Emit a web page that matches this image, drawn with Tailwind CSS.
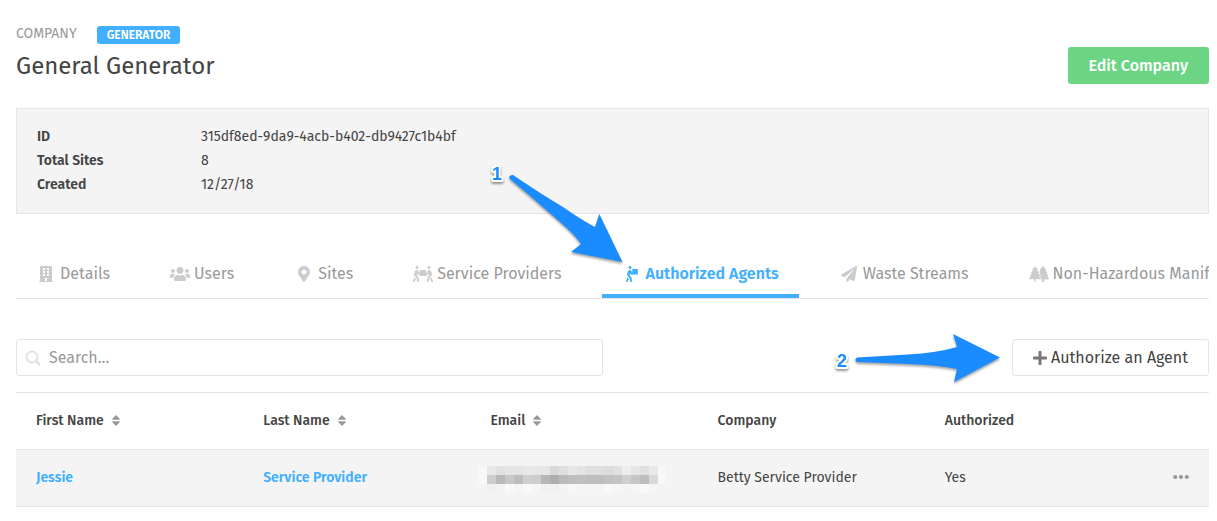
<!DOCTYPE html>
<html lang="en">
<head>
    <meta charset="UTF-8">
    <meta name="viewport" content="width=device-width, initial-scale=1.0">
    <title>General Generator</title>

    <script src="https://cdn.jsdelivr.net/npm/@tailwindcss/browser@4"></script>
</head>

<body class="relative bg-white text-[#444] text-sm leading-6 overflow-x-hidden font-['Fira_Sans','Noto_Sans',sans-serif]">
    <!-- shared icons -->
    <svg class="hidden">
        <symbol id="sort" viewBox="0 0 8 11">
            <path d="M4 0 7.7 3.8Q8.2 4.8 7.2 4.8H.8Q-.2 4.8 .3 3.8ZM4 11 7.7 7.2Q8.2 6.2 7.2 6.2H.8Q-.2 6.2 .3 7.2Z"></path>
        </symbol>
    </svg>

    <div class="pl-4 pr-2 pt-[22px]">
        <header class="flex justify-between items-end">
            <div>
                <div class="flex items-end gap-5">
                    <span class="text-[#999]">COMPANY</span>
                    <span class="bg-[#42afff] text-white text-xs font-semibold leading-[18px] mb-[2px] px-[10px] rounded-[3px]">GENERATOR</span>
                </div>
                <h1 class="text-2xl leading-10">General Generator</h1>
            </div>

            <button class="bg-[#6cd584] text-white text-base font-medium h-[37px] px-[21px] mb-[2px] rounded-[3px]">Edit Company</button>
        </header>

        <dl class="grid grid-cols-[164px_1fr] mt-[22px] px-5 py-4 bg-[#f4f4f4] border border-[#e5e5e5]">
            <dt class="font-semibold">ID</dt>
            <dd>315df8ed-9da9-4acb-b402-db9427c1b4bf</dd>
            <dt class="font-semibold">Total Sites</dt>
            <dd>8</dd>
            <dt class="font-semibold">Created</dt>
            <dd>12/27/18</dd>
        </dl>

        <nav class="flex gap-5 mt-9 border-b border-[#e5e5e5] overflow-hidden whitespace-nowrap text-base text-[#999]">
            <a href="#" class="flex shrink-0 items-center gap-1 px-5 pt-3 pb-2 border-b-4 border-transparent">
                <svg class="w-5 h-4 text-[#ccc]" viewBox="0 0 448 512" fill="currentColor">
                    <path fill-rule="evenodd" d="M436 480h-20V24c0-13-11-24-24-24H56C43 0 32 11 32 24v456H12c-7 0-12 5-12 12v20h448v-20c0-7-5-12-12-12zM128 64h64v64h-64zM256 64h64v64h-64zM128 160h64v64h-64zM256 160h64v64h-64zM128 256h64v64h-64zM256 256h64v64h-64zM192 384h64v96h-64z"></path>
                </svg>
                Details
            </a>
            <a href="#" class="flex shrink-0 items-center gap-1 px-5 pt-3 pb-2 border-b-4 border-transparent">
                <svg class="w-5 h-4 text-[#ccc]" viewBox="0 0 640 512" fill="currentColor">
                    <path d="M96 224c35.300 0 64-28.700 64-64s-28.700-64-64-64-64 28.700-64 64 28.700 64 64 64zm448 0c35.300 0 64-28.700 64-64s-28.700-64-64-64-64 28.700-64 64 28.700 64 64 64zm32 32h-64c-17.600 0-33.500 7.100-45.100 18.600 40.300 22.100 68.900 62 75.100 109.400h66c17.700 0 32-14.300 32-32v-32c0-35.300-28.700-64-64-64zm-256 0c61.900 0 112-50.100 112-112S381.900 32 320 32 208 82.100 208 144s50.100 112 112 112zm76.800 32h-8.300c-20.800 10-43.900 16-68.500 16s-47.600-6-68.500-16h-8.300C179.600 288 128 339.600 128 403.200V432c0 26.500 21.500 48 48 48h288c26.500 0 48-21.500 48-48v-28.800c0-63.600-51.600-115.200-115.200-115.200zm-223.700-13.400C161.500 263.100 145.600 256 128 256H64c-35.300 0-64 28.700-64 64v32c0 17.700 14.300 32 32 32h65.900c6.300-47.400 34.900-87.300 75.200-109.400z"></path>
                </svg>
                Users
            </a>
            <a href="#" class="flex shrink-0 items-center gap-1 px-5 pt-3 pb-2 border-b-4 border-transparent">
                <svg class="w-5 h-4 text-[#ccc]" viewBox="0 0 384 512" fill="currentColor">
                    <path d="M172.300 501.700C27 291 0 269.400 0 192 0 86 86 0 192 0s192 86 192 192c0 77.400-27 99-172.300 309.700-9.500 13.800-29.900 13.800-39.400 0zM192 272c44.200 0 80-35.800 80-80s-35.800-80-80-80-80 35.800-80 80 35.800 80 80 80z"></path>
                </svg>
                Sites
            </a>
            <a href="#" class="flex shrink-0 items-center gap-1 px-5 pt-3 pb-2 border-b-4 border-transparent">
                <svg class="w-5 h-4 text-[#ccc]" viewBox="0 0 640 512" fill="currentColor">
                    <path d="M128 96c26.500 0 48-21.500 48-48S154.500 0 128 0 80 21.500 80 48s21.500 48 48 48zm384 0c26.500 0 48-21.500 48-48S538.500 0 512 0s-48 21.500-48 48 21.500 48 48 48zm125.700 372.100l-44-110-41.100 46.400-2 18.200 27.700 69.200c5 12.500 17 20.100 29.700 20.100 4 0 8-.7 11.900-2.300 16.400-6.600 24.400-25.200 17.800-41.600zm-34.200-209.800L585 178.100c-4.600-20-18.600-36.800-37.500-44.900-18.500-8-39-6.700-56.100 3.300-22.700 13.400-39.700 34.500-48.100 59.400L432 229.800 416 240v-96c0-8.800-7.200-16-16-16H240c-8.800 0-16 7.200-16 16v96l-16.100-10.200-11.300-33.900c-8.300-25-25.400-46-48.100-59.400-17.200-10-37.600-11.300-56.100-3.300-18.900 8.100-32.900 24.900-37.500 44.900l-18.400 80.200c-4.600 20 .7 41.200 14.400 56.700l67.200 75.900 10.100 92.600C130 499.800 143.800 512 160 512c1.200 0 2.300-.1 3.500-.2 17.600-1.900 30.200-17.700 28.300-35.300l-10.100-92.800c-1.500-13-6.900-25.100-15.600-35l-43.300-49 17.600-70.300 6.800 20.400c4.100 12.500 11.900 23.400 24.500 32.600l51.100 32.500c4.600 2.900 12.100 4.600 17.200 5h160c5.100-.4 12.600-2.100 17.200-5l51.100-32.500c12.600-9.200 20.400-20 24.500-32.600l6.800-20.400 17.600 70.300-43.300 49c-8.700 9.900-14.100 22-15.600 35l-10.100 92.800c-1.900 17.600 10.800 33.400 28.300 35.300 1.200.1 2.300.2 3.500.2 16.100 0 30-12.100 31.800-28.500l10.100-92.600 67.200-75.900c13.600-15.500 19-36.700 14.400-56.700zM46.300 358.100l-44 110c-6.600 16.400 1.400 35 17.800 41.600 16.800 6.600 35.100-1.700 41.600-17.800l27.700-69.200-2-18.200-41.100-46.400z"></path>
                </svg>
                Service Providers
            </a>
            <a href="#" aria-current="page" class="flex shrink-0 items-center gap-1 px-5 pt-3 pb-2 border-b-4 border-[#42afff] text-[#42afff] font-semibold">
                <svg class="w-5 h-4" viewBox="0 0 384 512" fill="currentColor">
                    <path d="M128 96c26.500 0 48-21.500 48-48S154.500 0 128 0 80 21.500 80 48s21.500 48 48 48zM207.900 229.800l-11.300-33.900c-8.300-25-25.400-46-48.100-59.400-17.200-10-37.600-11.300-56.100-3.300-18.900 8.100-32.900 24.900-37.500 44.900l-18.400 80.200c-4.600 20 .7 41.200 14.400 56.700l67.200 75.900 10.100 92.600C130 499.800 143.800 512 160 512c1.200 0 2.300-.1 3.500-.2 17.600-1.900 30.200-17.700 28.300-35.300l-10.100-92.800c-1.500-13-6.900-25.100-15.600-35l-43.300-49 17.600-70.300 6.800 20.400c4.100 12.500 11.900 23.400 24.500 32.600l40 20V250ZM46.300 358.100l-44 110c-6.600 16.400 1.400 35 17.800 41.600 16.800 6.600 35.100-1.700 41.600-17.800l27.700-69.200-2-18.200-41.100-46.400z"></path>
                    <rect x="200" y="96" width="184" height="176" rx="14"></rect>
                </svg>
                Authorized Agents
            </a>
            <a href="#" class="flex shrink-0 items-center gap-1 px-5 pt-3 pb-2 border-b-4 border-transparent">
                <svg class="w-5 h-4 text-[#ccc]" viewBox="0 0 512 512" fill="currentColor">
                    <path d="M476 3.200L12.500 270.600c-18.100 10.400-15.800 35.600 2.200 43.200L121 358.400l287.300-253.200c5.500-4.900 13.300 2.600 8.600 8.300L176 407v80.500c0 23.600 28.500 32.900 42.500 15.800L282 426l124.600 52.200c14.200 6 30.400-2.900 33-18.200l72-432C515 7.800 493.300-6.800 476 3.200z"></path>
                </svg>
                Waste Streams
            </a>
            <a href="#" class="flex shrink-0 items-center gap-1 px-5 pt-3 pb-2 border-b-4 border-transparent">
                <svg class="w-5 h-4 text-[#ccc]" viewBox="0 0 640 512" fill="currentColor">
                    <path d="M450 0 545 106q10 20-12 22h-18l70 78q10 20-12 22h-18l60 78q10 20-12 22h-18l52 68q8 32-20 36H482v40l18 40h-96l18-40v-40H340V120Z"></path>
                    <path stroke="#fff" stroke-width="20" d="M190 0 290 106q10 20-12 22h-20l76 78q10 20-12 22h-20l64 78q10 20-12 22h-20l48 68q8 32-20 36H222v40l18 40h-96l18-40v-40H22q-28-4-20-36l48-68H30q-22-2-12-22l64-78H62q-22-2-12-22l76-78h-20q-22-2-12-22Z"></path>
                </svg>
                Non-Hazardous Manifests
            </a>
        </nav>

        <div class="flex justify-between mt-10 text-base">
            <label class="flex items-center w-[587px] h-[37px] pl-2 border border-[#e5e5e5] rounded-[3px]">
                <svg class="w-4 h-4 mr-2 shrink-0 text-[#e2e2e2]" viewBox="0 0 16 16" fill="none" stroke="currentColor" stroke-width="2">
                    <circle cx="7" cy="7" r="5.500"></circle>
                    <path d="M11 11l4 4" stroke-width="2.500"></path>
                </svg>
                <input type="search" aria-label="Search" placeholder="Search..." class="flex-1 min-w-0 h-full outline-none placeholder:text-[#999]">
            </label>

            <button class="flex items-center justify-center gap-1 px-5 h-[37px] border border-[#e5e5e5] rounded-[3px]">
                <svg class="w-[14px] h-4 text-[#777]" viewBox="0 0 448 512" fill="currentColor">
                    <path d="M416 208H272V64c0-17.700-14.300-32-32-32h-32c-17.700 0-32 14.300-32 32v144H32c-17.700 0-32 14.300-32 32v32c0 17.700 14.300 32 32 32h144v144c0 17.700 14.300 32 32 32h32c17.700 0 32-14.300 32-32V304h144c17.700 0 32-14.300 32-32v-32c0-17.700-14.300-32-32-32z"></path>
                </svg>
                Authorize an Agent
            </button>
        </div>

        <table class="table-fixed w-full mt-4 border-t border-[#e5e5e5] text-left">
            <thead>
                <tr class="h-[57px] border-b border-[#e5e5e5]">
                    <th class="pl-5 font-medium">
                        <button class="flex items-center gap-2">First Name <svg class="w-2 h-[11px] mb-[2px] fill-[#999]"><use href="#sort"></use></svg></button>
                    </th>
                    <th class="pl-5 font-medium">
                        <button class="flex items-center gap-2">Last Name <svg class="w-2 h-[11px] mb-[2px] fill-[#999]"><use href="#sort"></use></svg></button>
                    </th>
                    <th class="pl-5 font-medium">
                        <button class="flex items-center gap-2">Email <svg class="w-2 h-[11px] mb-[2px] fill-[#999]"><use href="#sort"></use></svg></button>
                    </th>
                    <th class="pl-5 font-medium">Company</th>
                    <th class="pl-5 font-medium">Authorized</th>
                    <th class="w-[57px]"></th>
                </tr>
            </thead>
            <tbody>
                <tr class="h-[57px] bg-[#f4f4f4] border-b border-[#e5e5e5]">
                    <td class="pl-5"><a href="#" class="font-semibold text-[#42afff]">Jessie</a></td>
                    <td class="pl-5"><a href="#" class="font-semibold text-[#42afff]">Service Provider</a></td>
                    <td class="pl-2">
                        <!-- redacted address, filled in below -->
                        <svg id="redacted" class="block w-[187px] h-[29px]" viewBox="0 -2 187 29" shape-rendering="crispEdges"></svg>
                    </td>
                    <td class="pl-5">Betty Service Provider</td>
                    <td class="pl-5">Yes</td>
                    <td>
                        <button aria-label="More" class="flex ml-auto mr-5">
                            <svg class="w-4 h-4 fill-[#999]" viewBox="0 0 16 16">
                                <circle cx="2.200" cy="7" r="2.100"></circle>
                                <circle cx="8" cy="7" r="2.100"></circle>
                                <circle cx="13.800" cy="7" r="2.100"></circle>
                            </svg>
                        </button>
                    </td>
                </tr>
            </tbody>
        </table>
    </div>

    <!-- callouts -->
    <svg class="absolute top-0 left-0 w-[1217px] h-[521px] pointer-events-none" viewBox="0 0 1217 521">
        <g class="drop-shadow-[0_2px_1px_rgba(0,0,0,0.35)]" fill="#1a8cff">
            <path d="M509.500 178.500Q508.500 175 513 175Q541 194 563 207Q580 219 595 227L599.300 214 622.500 262 571 252 581 244Q574 234 560 222Q534 199 509.500 178.500Z"></path>
            <path d="M857 362Q853.500 360 857 357.500L908 354.500Q936 353 957 347L953 334 1000 357.500 954 382 957 369Q938 365 908 364Z"></path>
        </g>
        <g class="drop-shadow-[0_2px_1px_rgba(0,0,0,0.4)] font-['Liberation_Sans',sans-serif] text-[18px] font-bold" fill="#1a8cff" stroke="#fff" stroke-width="4" stroke-linejoin="round" paint-order="stroke">
            <text x="492" y="180">1</text>
            <text x="837" y="367">2</text>
        </g>
    </svg>

    <script>
        const redacted = document.querySelector("#redacted");
        const rows = [
            "f8 e8 e1 e5 e4 e8 e7 e6 d9 df e7 e3 df df dc e1 ee e6 e0 e9 f8",
            "f8 cd b9 c7 bd cf cd b6 ae ba be c0 be be c2 c4 cf c6 bd d9 f8",
            "f4 f0 f4 f9 f6 f9 f5 f1 f0 f4 f8 f5 f5 f5 f9 f6 f4 f6 f9 f5 f4",
        ];

        rows.forEach((row, y) => {
            row.split(" ").forEach((c, x) => {
                const rect = document.createElementNS("http://www.w3.org/2000/svg", "rect");
                rect.setAttribute("x", x * 9);
                rect.setAttribute("y", y * 9);
                rect.setAttribute("width", 9);
                rect.setAttribute("height", 9);
                rect.setAttribute("fill", "#" + c + c + c);
                redacted.appendChild(rect);
            });
        });
    </script>
</body>
</html>
